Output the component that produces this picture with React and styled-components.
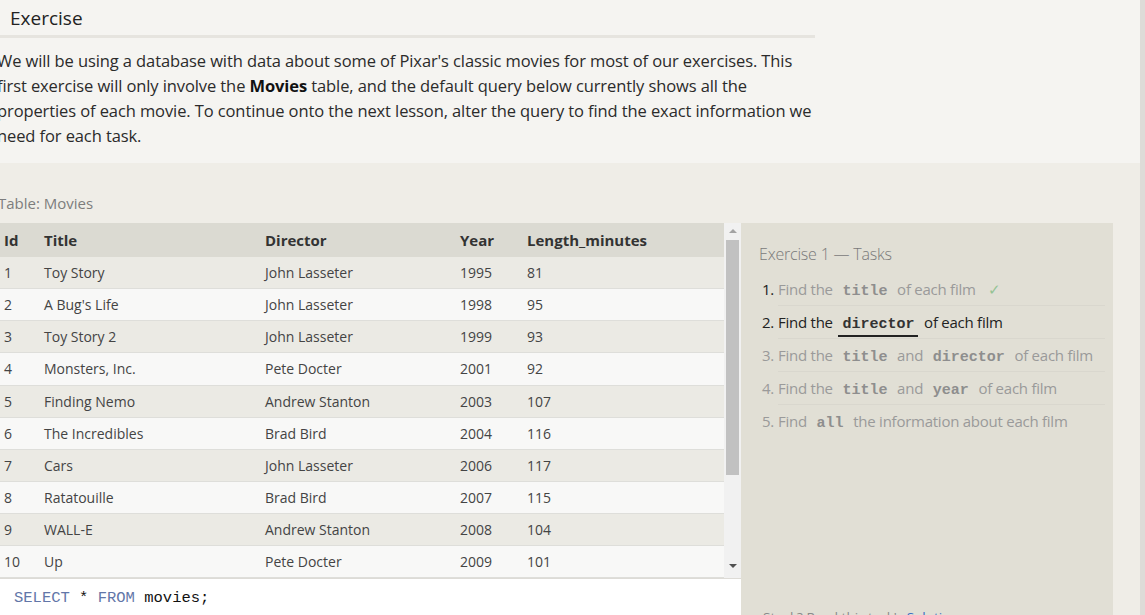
import React from 'react'
import styled, { createGlobalStyle } from 'styled-components'

const GlobalStyle = createGlobalStyle`
  html, body {
    margin: 0;
    padding: 0;
    background: #efede7;
    overflow: hidden;
  }
  body {
    font-family: "Open Sans", "Noto Sans", sans-serif;
    color: #333;
  }
`

const movies = [
  [1, 'Toy Story', 'John Lasseter', 1995, 81],
  [2, "A Bug's Life", 'John Lasseter', 1998, 95],
  [3, 'Toy Story 2', 'John Lasseter', 1999, 93],
  [4, 'Monsters, Inc.', 'Pete Docter', 2001, 92],
  [5, 'Finding Nemo', 'Andrew Stanton', 2003, 107],
  [6, 'The Incredibles', 'Brad Bird', 2004, 116],
  [7, 'Cars', 'John Lasseter', 2006, 117],
  [8, 'Ratatouille', 'Brad Bird', 2007, 115],
  [9, 'WALL-E', 'Andrew Stanton', 2008, 104],
  [10, 'Up', 'Pete Docter', 2009, 101],
]

const tasks = [
  { done: true, parts: ['Find the', { code: 'title' }, 'of each film'] },
  { current: true, parts: ['Find the', { code: 'director' }, 'of each film'] },
  { parts: ['Find the', { code: 'title' }, 'and', { code: 'director' }, 'of each film'] },
  { parts: ['Find the', { code: 'title' }, 'and', { code: 'year' }, 'of each film'] },
  { parts: ['Find', { code: 'all' }, 'the information about each film'] },
]

const Page = styled.div`
  display: flex;
  width: 1145px;
  height: 615px;
  overflow: hidden;
`

const Main = styled.div`
  width: 1140px;
  display: flex;
  flex-direction: column;
`

const Edge = styled.div`
  width: 5px;
  background: #dedcd8;
`

const Intro = styled.section`
  flex-shrink: 0;
  height: 163px;
  background: #f5f4f1;
`

const Heading = styled.h1`
  margin: 0;
  width: 805px;
  padding: 5px 0 4px 10px;
  font-size: 19px;
  line-height: 26px;
  font-weight: 400;
  color: #222;
  border-bottom: 3px solid #e6e4df;
`

const Lead = styled.p`
  margin: 10px 0 0 -3px;
  width: 822px;
  font-size: 16.5px;
  line-height: 25px;
  letter-spacing: -0.1px;
  color: #2b2b2b;

  strong {
    font-weight: 700;
    color: #111;
  }
`

const Workspace = styled.section`
  flex-shrink: 0;
  padding-top: 30px;
`

const Caption = styled.div`
  margin: 0 0 10px -2px;
  font-size: 15px;
  line-height: 20px;
  color: #7d7d7d;
`

const Board = styled.div`
  display: flex;
  width: 1113px;
`

const LeftCol = styled.div`
  width: 741px;
  display: flex;
  flex-direction: column;
`

const TableWrap = styled.div`
  display: flex;
  height: 355px;
  overflow: hidden;
`

const Table = styled.div`
  width: 724px;
`

const Row = styled.div`
  display: grid;
  grid-template-columns: 40px 221px 195px 67px 201px;
  align-items: center;
  height: ${p => (p.$head ? '34px' : '31.15px')};
  background: ${p => (p.$head ? '#dbdad2' : p.$odd ? '#ebeae4' : '#f8f8f7')};
  border-bottom: ${p => (p.$head ? 'none' : '1px solid #dededa')};
  font-size: ${p => (p.$head ? '15px' : '14px')};
  font-weight: ${p => (p.$head ? 700 : 400)};
  color: ${p => (p.$head ? '#333' : '#444')};
`

const Cell = styled.div`
  padding-left: 4px;
  white-space: nowrap;
`

const Scrollbar = styled.div`
  width: 17px;
  background: #f1f1f1;
  display: flex;
  flex-direction: column;
  align-items: center;
`

const Arrow = styled.div`
  width: 0;
  height: 0;
  border-left: 4px solid transparent;
  border-right: 4px solid transparent;
  ${p =>
    p.$down
      ? 'border-top: 4px solid #505050; margin-top: 89px;'
      : 'border-bottom: 4px solid #a3a3a3; margin-top: 6px;'}
`

const Thumb = styled.div`
  width: 13px;
  height: 235px;
  margin-top: 7px;
  background: #c1c1c1;
`

const Editor = styled.div`
  height: 40px;
  background: #fff;
  border-top: 1px solid #dddbd6;
  padding: 9px 0 0 14px;
  font-family: "Liberation Mono", "DejaVu Sans Mono", monospace;
  font-size: 15.5px;
  line-height: 20px;
  color: #111;
`

const Keyword = styled.span`
  color: #6276a8;
`

const TaskPanel = styled.aside`
  width: 354px;
  height: 384px;
  padding: 20px 0 0 18px;
  background: #e1dfd5;
  display: flex;
  flex-direction: column;
`

const PanelTitle = styled.div`
  font-size: 16px;
  line-height: 22px;
  color: #7a7a7a;
  font-weight: 300;
  letter-spacing: -0.2px;
`

const TaskList = styled.div`
  margin-top: 8px;
  padding-right: 8px;
`

const Task = styled.div`
  display: flex;
  height: 33px;
  font-size: 15px;
  letter-spacing: -0.25px;
`

const Num = styled.span`
  width: 16px;
  padding-left: 3px;
  line-height: 32px;
  color: ${p => (p.$dark ? '#222' : '#9a9a9a')};
`

const TaskBody = styled.div`
  flex: 1;
  height: 32px;
  line-height: 32px;
  border-bottom: ${p => (p.$last ? 'none' : '1px solid #d9d7ce')};
  color: ${p => (p.$current ? '#222' : '#9a9a9a')};
  white-space: nowrap;
`

const Code = styled.code`
  font-family: "Liberation Mono", "DejaVu Sans Mono", monospace;
  font-weight: 700;
  font-size: 15px;
  line-height: 1;
  letter-spacing: 0;
  padding: 0 4px 2px;
  margin: 0 2px;
  color: ${p => (p.$current ? '#333' : '#8e8e8e')};
  border-bottom: ${p => (p.$underline ? '2px solid #222' : 'none')};
`

const Check = styled.span`
  margin-left: 12px;
  color: #94c394;
`

const Footer = styled.div`
  margin-top: auto;
  padding-left: 4px;
  font-size: 13.5px;
  line-height: 20px;
  color: #8a8a8a;

  a {
    color: #3b6fc4;
    text-decoration: none;
  }
`

const renderParts = (parts, current) =>
  parts.map((part, i) =>
    typeof part === 'string' ? (
      <span key={i}>{i > 0 ? ' ' : ''}{part}{i < parts.length - 1 ? ' ' : ''}</span>
    ) : (
      <Code key={i} $current={current} $underline={current}>{part.code}</Code>
    )
  )

const App = () => {
  return (
    <>
      <GlobalStyle />
      <Page>
        <Main>
          <Intro>
            <Heading>Exercise</Heading>
            <Lead>
              We will be using a database with data about some of Pixar's classic movies for most of our
              exercises. This first exercise will only involve the <strong>Movies</strong> table, and the
              default query below currently shows all the properties of each movie. To continue onto the
              next lesson, alter the query to find the exact information we need for each task.
            </Lead>
          </Intro>

          <Workspace>
            <Caption>Table: Movies</Caption>
            <Board>
              <LeftCol>
                <TableWrap>
                  <Table>
                    <Row $head>
                      <Cell>Id</Cell>
                      <Cell>Title</Cell>
                      <Cell>Director</Cell>
                      <Cell>Year</Cell>
                      <Cell>Length_minutes</Cell>
                    </Row>
                    {movies.map((m, i) => (
                      <Row key={m[0]} $odd={i % 2 === 0}>
                        {m.map((v, j) => (
                          <Cell key={j}>{v}</Cell>
                        ))}
                      </Row>
                    ))}
                  </Table>
                  <Scrollbar>
                    <Arrow />
                    <Thumb />
                    <Arrow $down />
                  </Scrollbar>
                </TableWrap>
                <Editor>
                  <Keyword>SELECT</Keyword> * <Keyword>FROM</Keyword> movies;
                </Editor>
              </LeftCol>

              <TaskPanel>
                <PanelTitle>Exercise 1 — Tasks</PanelTitle>
                <TaskList>
                  {tasks.map((t, i) => (
                    <Task key={i}>
                      <Num $dark={t.done || t.current}>{i + 1}.</Num>
                      <TaskBody $current={t.current} $last={i === tasks.length - 1}>
                        {renderParts(t.parts, t.current)}
                        {t.done && <Check>✓</Check>}
                      </TaskBody>
                    </Task>
                  ))}
                </TaskList>
                <Footer>
                  Stuck? Read this task's <a href="#">Solution</a>
                </Footer>
              </TaskPanel>
            </Board>
          </Workspace>
        </Main>
        <Edge />
      </Page>
    </>
  )
}

export default App
